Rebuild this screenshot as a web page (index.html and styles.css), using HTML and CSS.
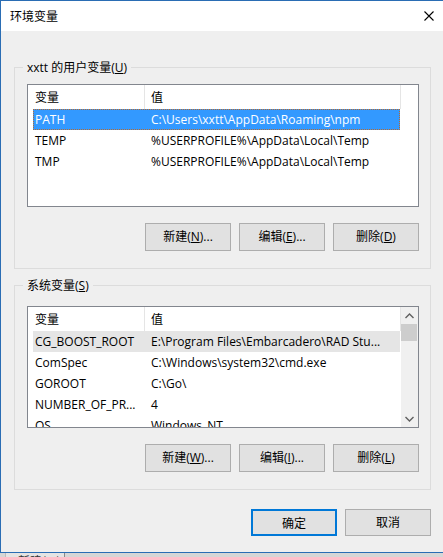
FILE: index.html
```html
<!DOCTYPE html>
<html lang="zh-CN">
<head>
<meta charset="utf-8">
<title>环境变量</title>
<link rel="stylesheet" href="styles.css">
</head>
<body>
<div class="window">
  <div class="titlebar">
    <span class="title">环境变量</span>
    <svg class="close" width="10" height="10" viewBox="0 0 10 10"><path d="M0.5 0.5 L9.5 9.5 M9.5 0.5 L0.5 9.5" stroke="#000" stroke-width="1.1" fill="none"/></svg>
  </div>
  <div class="content">
    <section class="group group-user">
      <div class="legend">xxtt 的用户变量(<u>U</u>)</div>
      <div class="list list-user">
        <div class="list-main">
          <div class="list-head"><div class="hc hc1">变量</div><div class="hc hc2">值</div></div>
          <div class="row selected"><span class="c1">PATH</span><span class="c2">C:\Users\xxtt\AppData\Roaming\npm</span></div>
          <div class="row"><span class="c1">TEMP</span><span class="c2">%USERPROFILE%\AppData\Local\Temp</span></div>
          <div class="row"><span class="c1">TMP</span><span class="c2">%USERPROFILE%\AppData\Local\Temp</span></div>
        </div>
      </div>
      <div class="btns">
        <button class="btn">新建(<u>N</u>)...</button>
        <button class="btn">编辑(<u>E</u>)...</button>
        <button class="btn">删除(<u>D</u>)</button>
      </div>
    </section>

    <section class="group group-sys">
      <div class="legend">系统变量(<u>S</u>)</div>
      <div class="list list-sys">
        <div class="list-main">
          <div class="list-head"><div class="hc hc1">变量</div><div class="hc hc2">值</div></div>
          <div class="row hover"><span class="c1">CG_BOOST_ROOT</span><span class="c2">E:\Program Files\Embarcadero\RAD Stu...</span></div>
          <div class="row"><span class="c1">ComSpec</span><span class="c2">C:\Windows\system32\cmd.exe</span></div>
          <div class="row"><span class="c1">GOROOT</span><span class="c2">C:\Go\</span></div>
          <div class="row"><span class="c1">NUMBER_OF_PR...</span><span class="c2">4</span></div>
          <div class="row"><span class="c1">OS</span><span class="c2">Windows_NT</span></div>
        </div>
        <div class="scrollbar">
          <div class="sb-arrow"><svg width="9" height="6" viewBox="0 0 9 6"><path d="M0.5 5 L4.5 1 L8.5 5" stroke="#606060" stroke-width="1.4" fill="none"/></svg></div>
          <div class="sb-thumb"></div>
          <div class="sb-track"></div>
          <div class="sb-arrow"><svg width="9" height="6" viewBox="0 0 9 6"><path d="M0.5 1 L4.5 5 L8.5 1" stroke="#606060" stroke-width="1.4" fill="none"/></svg></div>
        </div>
      </div>
      <div class="btns">
        <button class="btn">新建(<u>W</u>)...</button>
        <button class="btn">编辑(<u>I</u>)...</button>
        <button class="btn">删除(<u>L</u>)</button>
      </div>
    </section>

    <div class="dialog-btns">
      <button class="btn btn-default">确定</button>
      <button class="btn">取消</button>
    </div>
  </div>
</div>
<div class="behind">
  <div class="behind-btn">新建(W)</div>
</div>
</body>
</html>
```
FILE: styles.css
```css
* { box-sizing: border-box; }

html, body {
  margin: 0;
  padding: 0;
  background: #ececec;
  overflow: hidden;
}

body {
  width: 443px;
  height: 557px;
  font-family: "Open Sans", "Noto Sans CJK SC", sans-serif;
  font-size: 12px;
  color: #000;
}

.window {
  width: 443px;
  background: #efefef;
  border-top: 1px solid #2a6db4;
  border-left: 1px solid #2a6db4;
  border-bottom: 1px solid #2a6db4;
}

.titlebar {
  height: 30px;
  background: #fff;
  display: flex;
  align-items: center;
  justify-content: space-between;
  padding: 0 9px 0 9px;
}

.title {
  font-family: "Noto Sans CJK SC", sans-serif;
  font-size: 12px;
  line-height: 30px;
}

.close { display: block; }

.content {
  padding: 36px 0 16px 13px;
}

.group {
  width: 417px;
  border: 1px solid #dcdcdc;
  padding: 0 11px 17px 12px;
}

.group-sys { margin-top: 16px; }

.legend {
  display: table;
  margin: -8px 0 0 -4px;
  padding: 0 4px;
  height: 16px;
  line-height: 16px;
  background: #efefef;
  white-space: nowrap;
}

.group-user .list { margin-top: 8px; height: 123px; }
.group-sys .list { margin-top: 12px; height: 122px; }

.list {
  width: 392px;
  border: 1px solid #82868e;
  background: #fff;
  display: flex;
  overflow: hidden;
}

.list-main {
  width: 373px;
  overflow: hidden;
}

.list-head {
  display: flex;
  height: 24px;
}

.hc {
  line-height: 23px;
  border-right: 1px solid #e5e5e5;
  font-family: "Noto Sans CJK SC", sans-serif;
}

.hc1 { width: 117px; padding-left: 7px; }
.hc2 { width: 256px; padding-left: 6px; }

.row {
  display: grid;
  grid-template-columns: 116px 1fr;
  height: 21px;
  line-height: 21px;
  margin-left: 5px;
  width: 367px;
  white-space: nowrap;
}

.row span { padding-left: 2px; overflow: hidden; }

.row.selected {
  background: #3399ff;
  color: #fff;
  outline: 1px dotted #b8692c;
  outline-offset: -1px;
}

.row.hover { background: #e5e5e5; }

.scrollbar {
  width: 17px;
  background: #f0f0f0;
  display: flex;
  flex-direction: column;
}

.sb-arrow {
  height: 17px;
  display: flex;
  align-items: center;
  justify-content: center;
}

.sb-arrow svg { display: block; }

.sb-thumb {
  height: 17px;
  margin-right: 1px;
  background: #cdcdcd;
}

.sb-track { flex: 1; }

.btns {
  display: flex;
  justify-content: flex-end;
  gap: 8px;
  margin-top: 16px;
}

.btn {
  width: 86px;
  height: 28px;
  margin: 0;
  padding: 0;
  border: 1px solid #adadad;
  background: #e1e1e1;
  font-family: "Open Sans", "Noto Sans CJK SC", sans-serif;
  font-size: 12px;
  color: #000;
  line-height: 26px;
  white-space: nowrap;
}

.dialog-btns {
  width: 417px;
  display: flex;
  justify-content: flex-end;
  gap: 8px;
  margin-top: 19px;
}

.dialog-btns .btn { height: 27px; line-height: 25px; }

.btn-default {
  border: 2px solid #0078d7;
}

.behind {
  height: 4px;
  background: #d6d6d6;
  display: flex;
  overflow: hidden;
}

.behind-btn {
  margin-left: 5px;
  width: 60px;
  background: #e4e4e4;
  border-left: 1px solid #bdbdbd;
  border-right: 1px solid #8a8a8a;
  font-family: "Noto Sans CJK SC", sans-serif;
  font-size: 12px;
  line-height: 16px;
  padding-left: 12px;
  color: #333;
  overflow: hidden;
}
```
